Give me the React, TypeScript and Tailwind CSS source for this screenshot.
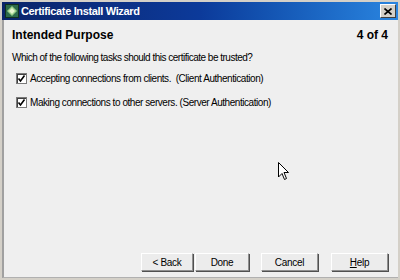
import React from "react";

function Check() {
  return (
    <span className="w-[11px] h-[11px] border border-[#7a7a7a] bg-white flex items-center justify-center shrink-0 shadow-[inset_1px_1px_0_#404040]">
      <svg width="9" height="9" viewBox="0 0 9 9">
        <path d="M1.5 4.5 L3.5 7 L7.5 1.5" stroke="#000" strokeWidth="1.6" fill="none" />
      </svg>
    </span>
  );
}

function Btn({ children, w, cls = "" }: { children: React.ReactNode; w: string; cls?: string }) {
  return (
    <div
      className={`${w} h-[18px] flex items-center justify-center bg-[#ececec] border-t border-l border-t-white border-l-white border-r border-b border-r-[#909090] border-b-[#909090] shadow-[1px_1px_0_#505050] text-[10px] tracking-[-0.3px] text-black ${cls}`}
    >
      {children}
    </div>
  );
}

export default function App() {
  return (
    <div
      className="relative w-[400px] h-[280px] bg-[#d4d0c8] p-[2px] flex flex-col"
      style={{ fontFamily: "'Liberation Sans', Arial, sans-serif" }}
    >
      <div className="h-[18px] bg-gradient-to-r from-[#0a246a] via-[#0c3a9a] to-[#2a85e0] flex items-center pl-[3px] pr-[2px] shrink-0">
        <svg width="14" height="14" viewBox="0 0 14 14" className="shrink-0">
          <rect x="0.5" y="0.5" width="13" height="13" fill="#2d6b4a" stroke="#103020" />
          <path d="M2 7 L7 2 L12 7 L7 12 Z" fill="#9ad08a" />
          <path d="M4 7 L7 4 L10 7 L7 10 Z" fill="#e6f5d0" />
        </svg>
        <span className="ml-[2px] text-white font-bold text-[11px] tracking-[-0.35px]">
          Certificate Install Wizard
        </span>
        <div className="ml-auto w-[16px] h-[14px] bg-[#d4d0c8] border-t border-l border-white border-r border-b border-r-[#404040] border-b-[#404040] flex items-center justify-center">
          <svg width="8" height="7" viewBox="0 0 8 7">
            <path d="M0.5 0.5 L7.5 6.5 M7.5 0.5 L0.5 6.5" stroke="#000" strokeWidth="1.6" />
          </svg>
        </div>
      </div>
      <div className="flex-1 bg-[#efefef] border-l-2 border-l-[#a0a0a0] border-b border-b-[#b0b0b0] flex flex-col pl-[8px] pr-[10px] pt-[7px] pb-[6px] text-black">
        <div className="flex items-center justify-between h-[16px]">
          <span className="font-bold text-[12px]">Intended Purpose</span>
          <span className="font-bold text-[12px]">4 of 4</span>
        </div>
        <div className="mt-[9px] h-[12px] leading-[12px] text-[10px] tracking-[-0.5px]">Which of the following tasks should this certificate be trusted?</div>
        <div className="mt-[8px] ml-[4px] h-[12px] flex items-center gap-[3px] text-[10px] tracking-[-0.45px]">
          <Check />
          <span>Accepting connections from clients.&nbsp; (Client Authentication)</span>
        </div>
        <div className="mt-[12px] ml-[4px] h-[12px] flex items-center gap-[3px] text-[10px] tracking-[-0.45px]">
          <Check />
          <span>Making connections to other servers. (Server Authentication)</span>
        </div>
        <div className="flex-1" />
        <div className="flex items-center justify-end pr-[0px] gap-[2px]">
          <Btn w="w-[52px]">&lt; Back</Btn>
          <Btn w="w-[54px]" cls="mr-[10px]">Done</Btn>
          <Btn w="w-[57px]" cls="mr-[11px]">Cancel</Btn>
          <Btn w="w-[57px]"><span><span className="underline">H</span>elp</span></Btn>
        </div>
      </div>
      <svg width="12" height="20" viewBox="0 0 12 20" className="absolute left-[278px] top-[162px]">
        <path d="M0.5 0.5 L0.5 15 L4 11.5 L6.5 17.5 L8.5 16.5 L6 10.5 L10.5 10.5 Z" fill="#fff" stroke="#000" />
      </svg>
    </div>
  );
}
